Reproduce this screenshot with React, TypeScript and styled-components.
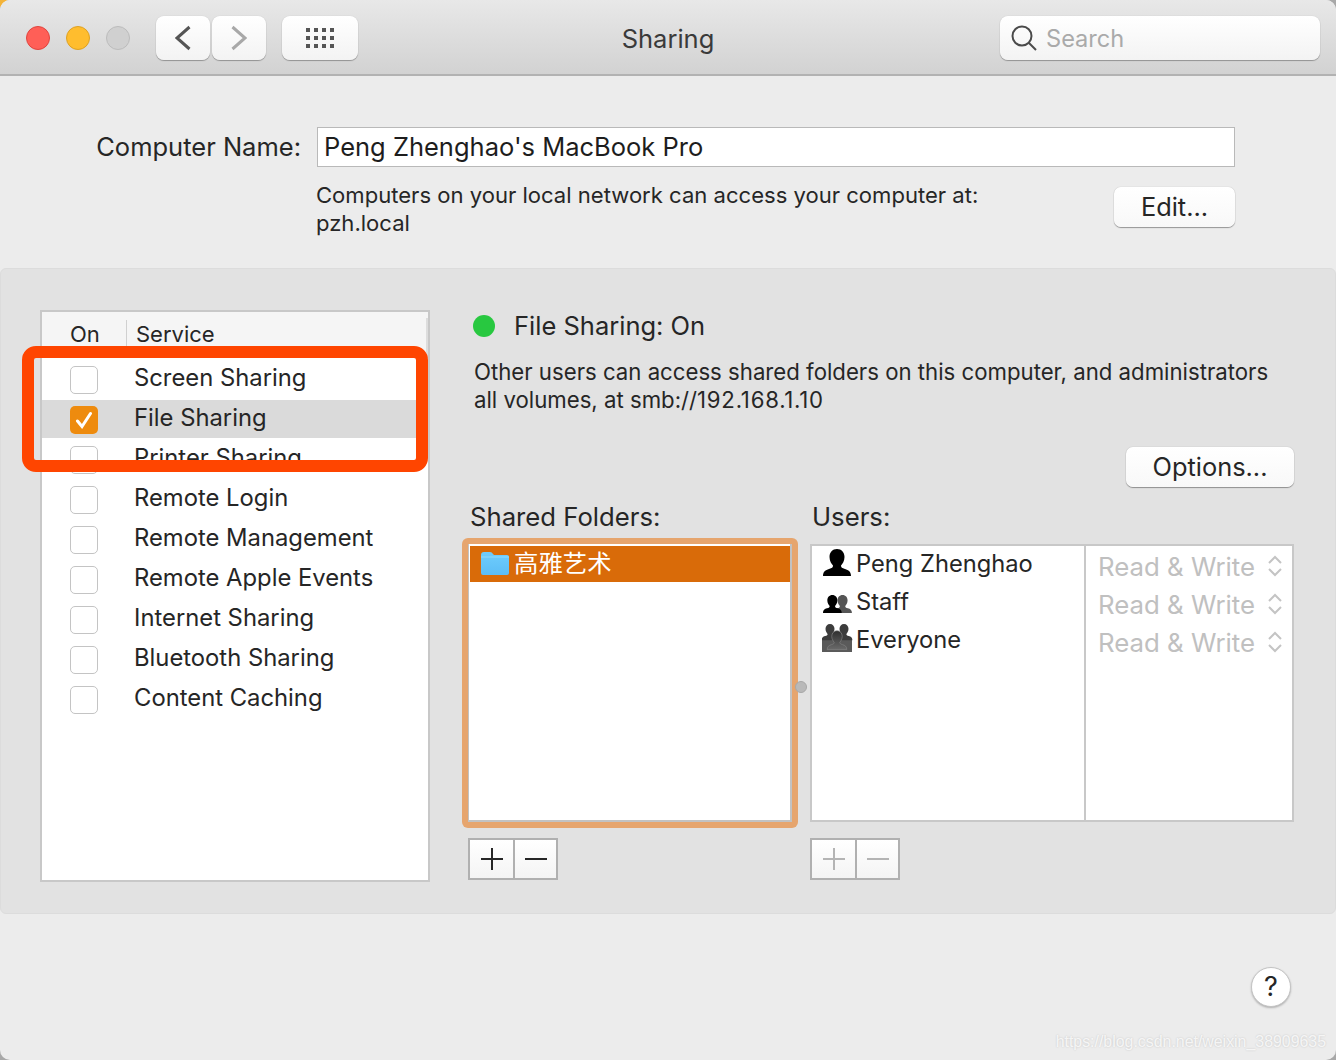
import React from 'react';
import styled, { createGlobalStyle } from 'styled-components';

const GlobalStyle = createGlobalStyle`
  html, body {
    margin: 0;
    padding: 0;
    background: #ffffff;
  }
  * {
    box-sizing: border-box;
  }
`;

const Desktop = styled.div`
  width: 1336px;
  height: 1060px;
  background: linear-gradient(135deg, #f3b33a 5px, #a8a8a8 5px);
`;

const Window = styled.div`
  position: relative;
  width: 1336px;
  height: 1060px;
  display: flex;
  flex-direction: column;
  overflow: hidden;
  background: #ececec;
  border-radius: 10px;
  font-family: Inter, "Noto Sans CJK SC", sans-serif;
  font-size: 22.2px;
  color: #262626;
`;

const TitleBar = styled.div`
  height: 76px;
  flex: none;
  display: flex;
  align-items: center;
  padding: 2px 16px 0 26px;
  background: linear-gradient(#e8e8e8, #d2d2d2);
  border-bottom: 2px solid #b2b2b2;
`;

const Light = styled.span<{ $bg: string; $edge: string }>`
  width: 24px;
  height: 24px;
  border-radius: 50%;
  background: ${p => p.$bg};
  border: 1px solid ${p => p.$edge};
  margin-right: 16px;
`;

const ToolButton = styled.div<{ $w: number }>`
  width: ${p => p.$w}px;
  height: 44px;
  display: flex;
  align-items: center;
  justify-content: center;
  border-radius: 8px;
  background: linear-gradient(#ffffff, #f3f3f3);
  box-shadow: 0 1px 1px rgba(0, 0, 0, 0.3), 0 0 1px rgba(0, 0, 0, 0.2);
`;

const NavGroup = styled.div`
  display: flex;
  gap: 2px;
  margin-left: 10px;
  margin-right: 16px;
`;

const Title = styled.div`
  width: 642px;
  padding-right: 22px;
  text-align: center;
  font-size: 25.5px;
  color: #3a3a3a;
`;

const SearchBox = styled.div`
  width: 320px;
  height: 44px;
  display: flex;
  align-items: center;
  gap: 9px;
  padding-left: 11px;
  border-radius: 8px;
  background: linear-gradient(#ffffff, #f3f3f3);
  box-shadow: 0 1px 1px rgba(0, 0, 0, 0.3), 0 0 1px rgba(0, 0, 0, 0.2);
  color: #aaaaaa;
  font-size: 23.6px;
`;

const NameSection = styled.div`
  height: 192px;
  flex: none;
  padding: 51px 101px 0 0;
  display: grid;
  grid-template-columns: 317px 1fr;
  align-content: start;
`;

const NameLabel = styled.div`
  height: 40px;
  line-height: 40px;
  padding-right: 16px;
  text-align: right;
  font-size: 25.5px;
`;

const NameInput = styled.div`
  height: 40px;
  line-height: 38px;
  padding-left: 6px;
  background: #ffffff;
  border: 1px solid #b9b9b9;
  font-size: 25.5px;
  color: #1d1d1d;
`;

const NameInfo = styled.div`
  grid-column: 2;
  display: flex;
  justify-content: space-between;
  margin-top: 20px;
`;

const NameNote = styled.div`
  margin: -6px 0 0 -1px;
  line-height: 28px;
  font-size: 22.07px;
`;

const PushButton = styled.div<{ $w: number }>`
  width: ${p => p.$w}px;
  height: 40px;
  line-height: 39px;
  text-align: center;
  background: linear-gradient(#ffffff, #f8f8f8);
  border-radius: 7px;
  box-shadow: 0 1px 1px rgba(0, 0, 0, 0.35), 0 0 1px rgba(0, 0, 0, 0.3);
  font-size: 25.4px;
`;

const Panel = styled.div`
  height: 646px;
  flex: none;
  display: grid;
  grid-template-columns: 390px minmax(0, 1fr);
  column-gap: 40px;
  padding: 41px 41px 0 39px;
  background: #e2e2e2;
  border: 1px solid #dcdcdc;
  border-radius: 6px;
`;

const ServiceList = styled.div`
  height: 572px;
  background: #ffffff;
  border: 2px solid #c8c8c8;
`;

const ListHeader = styled.div`
  position: relative;
  height: 46px;
  display: flex;
  align-items: flex-end;
  padding: 0 0 10px 28px;
  background: #f5f5f5;
  font-size: 22px;
  &::after {
    content: '';
    position: absolute;
    right: 0;
    top: 6px;
    bottom: 0;
    width: 2px;
    background: #dddddd;
  }
`;

const HeaderOn = styled.span`
  width: 57px;
  line-height: 28px;
  border-right: 1px solid #d0d0d0;
`;

const HeaderService = styled.span`
  padding-left: 9px;
  line-height: 28px;
`;

const ServiceRow = styled.div<{ $selected?: boolean }>`
  height: 40px;
  display: flex;
  align-items: center;
  padding: 0 0 2px 28px;
  gap: 36px;
  font-size: 23.8px;
  background: ${p => (p.$selected ? 'linear-gradient(transparent 2px, #dadada 2px)' : 'transparent')};
`;

const CheckBox = styled.span<{ $on?: boolean }>`
  width: 28px;
  height: 28px;
  flex: none;
  margin-top: 6px;
  display: flex;
  align-items: center;
  justify-content: center;
  border-radius: 5px;
  background: ${p => (p.$on ? '#ee8b0e' : '#ffffff')};
  border: ${p => (p.$on ? 'none' : '1px solid #c4c4c4')};
`;

const Detail = styled.div`
  display: flex;
  flex-direction: column;
  align-items: flex-start;
`;

const StatusLine = styled.div`
  display: flex;
  align-items: center;
  gap: 19px;
  height: 32px;
  margin-left: 3px;
  margin-bottom: 16px;
  font-size: 25.5px;
`;

const StatusDot = styled.span`
  width: 22px;
  height: 22px;
  border-radius: 50%;
  background: #28c840;
`;

const StatusText = styled.span`
  margin-top: -2px;
`;

const Description = styled.div`
  margin-left: 4px;
  line-height: 28px;
  white-space: pre;
`;

const Address = styled.span`
  letter-spacing: 0.75px;
`;

const OptionsRow = styled.div`
  align-self: stretch;
  display: flex;
  justify-content: flex-end;
  margin-top: 33px;
`;

const Tables = styled.div`
  display: flex;
  margin-top: 13px;
`;

const FolderColumn = styled.div`
  width: 340px;
  flex: none;
`;

const UserColumn = styled.div`
  width: 484px;
  flex: none;
`;

const TableLabel = styled.div<{ $inset?: number }>`
  height: 34px;
  line-height: 34px;
  padding-left: ${p => p.$inset ?? 0}px;
  font-size: 25.7px;
`;

const FocusRing = styled.div`
  width: 336px;
  height: 290px;
  margin-left: -8px;
  margin-top: 4px;
  padding: 6px;
  background: #e6a56e;
  border-radius: 6px;
`;

const FolderList = styled.div`
  height: 278px;
  padding-top: 2px;
  background: #ffffff;
  border: 1px solid #c2c2c2;
  border-width: 0 2px 2px 1px;
  position: relative;
`;

const FolderRow = styled.div`
  height: 36px;
  margin-left: 1px;
  display: flex;
  align-items: center;
  gap: 5px;
  padding-left: 11px;
  background: #d96b09;
  color: #ffffff;
  font-size: 24.4px;
`;

const FolderName = styled.span`
  margin-top: -6px;
`;

const Splitter = styled.span`
  position: absolute;
  right: -17px;
  top: 137px;
  width: 12px;
  height: 12px;
  border-radius: 50%;
  background: #b9b9b9;
  border: 1px solid #a8a8a8;
`;

const UserTable = styled.div`
  height: 278px;
  margin: 10px 0 16px;
  display: grid;
  grid-template-columns: 274px 1fr;
  background: #ffffff;
  border: 2px solid #c8c8c8;
`;

const NamesCol = styled.div`
  border-right: 2px solid #c8c8c8;
  padding-left: 10px;
`;

const UserRow = styled.div`
  height: 38px;
  display: flex;
  align-items: center;
  gap: 2px;
  font-size: 23.7px;
  position: relative;
  top: -2px;
`;

const UserIcon = styled.svg`
  width: 32px;
  height: 32px;
  flex: none;
  margin-top: 2px;
`;

const AccessCol = styled.div`
  padding: 1px 0 0 12px;
`;

const AccessRow = styled.div`
  height: 38px;
  display: flex;
  align-items: center;
  gap: 12px;
  color: #c0c0c0;
  font-size: 25.8px;
`;

const PlusMinus = styled.div<{ $off?: boolean }>`
  width: 90px;
  height: 42px;
  margin-top: 10px;
  display: grid;
  grid-template-columns: 1fr 1fr;
  background: linear-gradient(#ffffff, #f4f4f4);
  border: 2px solid #b0b0b0;
  color: ${p => (p.$off ? '#b4b4b4' : '#262626')};
`;

const PlusMinusCell = styled.div`
  display: flex;
  align-items: center;
  justify-content: center;
  & + & {
    border-left: 2px solid #b0b0b0;
  }
`;

const PlusMinusWrap = styled.div`
  margin-left: -2px;
`;

const Footer = styled.div`
  flex: 1;
  display: flex;
  justify-content: flex-end;
  padding: 53px 45px 0 0;
`;

const HelpButton = styled.div`
  width: 40px;
  height: 40px;
  line-height: 38px;
  text-align: center;
  border-radius: 50%;
  background: #ffffff;
  border: 1px solid #c4c4c4;
  box-shadow: 0 1px 2px rgba(0, 0, 0, 0.25);
  font-size: 27px;
`;

const Watermark = styled.div`
  position: absolute;
  right: 10px;
  bottom: 9px;
  font-family: "Liberation Sans", sans-serif;
  font-size: 15.9px;
  color: rgba(255, 255, 255, 0.8);
  text-shadow: 0 0 2px rgba(0, 0, 0, 0.18);
`;

const Annotation = styled.div`
  position: absolute;
  left: 22px;
  top: 346px;
  width: 406px;
  height: 126px;
  border: 12px solid #ff4500;
  border-radius: 14px;
`;

const services = [
  'Screen Sharing',
  'File Sharing',
  'Printer Sharing',
  'Remote Login',
  'Remote Management',
  'Remote Apple Events',
  'Internet Sharing',
  'Bluetooth Sharing',
  'Content Caching',
];

const Chevron = ({ dir, color }: { dir: 'left' | 'right'; color: string }) => (
  <svg width="18" height="26" viewBox="0 0 18 26" fill="none" stroke={color} strokeWidth="3">
    <path d={dir === 'left' ? 'M15.5 2 L3 13 L15.5 24' : 'M2.5 2 L15 13 L2.5 24'} />
  </svg>
);

const GridIcon = () => (
  <svg width="28" height="20" viewBox="0 0 28 20" fill="#555555">
    {[0, 1, 2].map(r =>
      [0, 1, 2, 3].map(c => <rect key={`${r}-${c}`} x={c * 8} y={r * 8} width="4" height="4" />)
    )}
  </svg>
);

const SearchIcon = () => (
  <svg width="26" height="26" viewBox="0 0 26 26" fill="none" stroke="#4a4a4a" strokeWidth="2">
    <circle cx="11" cy="11" r="9.5" />
    <path d="M18 18 L25 25" />
  </svg>
);

const Check = () => (
  <svg width="18" height="18" viewBox="0 0 18 18" fill="none" stroke="#ffffff" strokeWidth="3" strokeLinecap="round">
    <path d="M2.5 10 L7 15.5 L15.5 2.5" />
  </svg>
);

const FolderIcon = () => (
  <svg width="28" height="24" viewBox="0 0 28 24">
    <defs>
      <linearGradient id="folderFill" x1="0" y1="0" x2="0" y2="1">
        <stop offset="0" stopColor="#6fcdfd" />
        <stop offset="1" stopColor="#5cbdf6" />
      </linearGradient>
    </defs>
    <path d="M0 3 Q0 0 3 0 H9 Q11 0 12 2 L13 3 H26 Q28 3 28 5 V21 Q28 23 26 23 H2 Q0 23 0 21 Z" fill="url(#folderFill)" />
    <path d="M0 5 H28" stroke="#8edcff" strokeWidth="1" />
  </svg>
);

const BUST =
  'M15 1 C19.5 1 22.5 4.5 22.5 9 C22.5 13 20.5 16 19 17.5 C19 19.5 20 20 23 21 C26.5 22 29 23.5 29 28 H1 C1 23.5 3.5 22 7 21 C10 20 11 19.5 11 17.5 C9.5 16 7.5 13 7.5 9 C7.5 4.5 10.5 1 15 1 Z';

const PersonIcon = () => (
  <UserIcon viewBox="0 0 32 32">
    <path d={BUST} fill="#000000" />
  </UserIcon>
);

const GroupIcon = () => (
  <UserIcon viewBox="0 0 32 32">
    <path d={BUST} fill="#555555" transform="translate(10.5 8.3) scale(0.67)" />
    <path d={BUST} fill="#000000" transform="translate(0.3 8.3) scale(0.67)" />
  </UserIcon>
);

const EveryoneIcon = () => (
  <UserIcon viewBox="0 0 32 32">
    <defs>
      <linearGradient id="crowd" x1="0" y1="0" x2="0" y2="1">
        <stop offset="0" stopColor="#2e2e2e" />
        <stop offset="1" stopColor="#6a6a6a" />
      </linearGradient>
    </defs>
    <rect x="0" y="15" width="30" height="13" fill="#5a5a5a" />
    <path d={BUST} fill="#3c3c3c" transform="translate(-1 -0.6) scale(0.6)" />
    <path d={BUST} fill="#3c3c3c" transform="translate(13 -0.6) scale(0.6)" />
    <path d={BUST} fill="url(#crowd)" stroke="#8a8a8a" strokeWidth="0.8" transform="translate(4.5 6) scale(0.7)" />
  </UserIcon>
);

const Stepper = () => (
  <svg width="16" height="22" viewBox="0 0 16 22" fill="none" stroke="#c4c4c4" strokeWidth="2">
    <path d="M2 8 L8 2 L14 8" />
    <path d="M2 14 L8 20 L14 14" />
  </svg>
);

const PlusIcon = () => (
  <svg width="22" height="22" viewBox="0 0 22 22" stroke="currentColor" strokeWidth="2">
    <path d="M0 11 H22 M11 0 V22" />
  </svg>
);

const MinusIcon = () => (
  <svg width="22" height="22" viewBox="0 0 22 22" stroke="currentColor" strokeWidth="2">
    <path d="M0 11 H22" />
  </svg>
);

const users = [
  { name: 'Peng Zhenghao', icon: <PersonIcon /> },
  { name: 'Staff', icon: <GroupIcon /> },
  { name: 'Everyone', icon: <EveryoneIcon /> },
];

export default function App() {
  return (
    <>
      <GlobalStyle />
      <Desktop>
        <Window>
          <TitleBar>
            <Light $bg="#ff5f57" $edge="#e0443e" />
            <Light $bg="#ffbd2e" $edge="#dea123" />
            <Light $bg="#d0d0d0" $edge="#bcbcbc" />
            <NavGroup>
              <ToolButton $w={54}>
                <Chevron dir="left" color="#555555" />
              </ToolButton>
              <ToolButton $w={54}>
                <Chevron dir="right" color="#a8a8a8" />
              </ToolButton>
            </NavGroup>
            <ToolButton $w={76}>
              <GridIcon />
            </ToolButton>
            <Title>Sharing</Title>
            <SearchBox>
              <SearchIcon />
              Search
            </SearchBox>
          </TitleBar>

          <NameSection>
            <NameLabel>Computer Name:</NameLabel>
            <NameInput>Peng Zhenghao's MacBook Pro</NameInput>
            <NameInfo>
              <NameNote>
                Computers on your local network can access your computer at:
                <br />
                pzh.local
              </NameNote>
              <PushButton $w={121}>Edit...</PushButton>
            </NameInfo>
          </NameSection>

          <Panel>
            <ServiceList>
              <ListHeader>
                <HeaderOn>On</HeaderOn>
                <HeaderService>Service</HeaderService>
              </ListHeader>
              {services.map(s => (
                <ServiceRow key={s} $selected={s === 'File Sharing'}>
                  <CheckBox $on={s === 'File Sharing'}>{s === 'File Sharing' && <Check />}</CheckBox>
                  {s}
                </ServiceRow>
              ))}
            </ServiceList>

            <Detail>
              <StatusLine>
                <StatusDot />
                <StatusText>File Sharing: On</StatusText>
              </StatusLine>
              <Description>
                {'Other users can access shared folders on this computer, and administrators\nall volumes, at smb://'}
                <Address>192.168.1.10</Address>
              </Description>
              <OptionsRow>
                <PushButton $w={168}>Options...</PushButton>
              </OptionsRow>
              <Tables>
                <FolderColumn>
                  <TableLabel>Shared Folders:</TableLabel>
                  <FocusRing>
                    <FolderList>
                      <FolderRow>
                        <FolderIcon />
                        <FolderName>高雅艺术</FolderName>
                      </FolderRow>
                      <Splitter />
                    </FolderList>
                  </FocusRing>
                  <PlusMinusWrap>
                    <PlusMinus>
                      <PlusMinusCell>
                        <PlusIcon />
                      </PlusMinusCell>
                      <PlusMinusCell>
                        <MinusIcon />
                      </PlusMinusCell>
                    </PlusMinus>
                  </PlusMinusWrap>
                </FolderColumn>
                <UserColumn>
                  <TableLabel $inset={2}>Users:</TableLabel>
                  <UserTable>
                    <NamesCol>
                      {users.map(u => (
                        <UserRow key={u.name}>
                          {u.icon}
                          {u.name}
                        </UserRow>
                      ))}
                    </NamesCol>
                    <AccessCol>
                      {users.map(u => (
                        <AccessRow key={u.name}>
                          Read &amp; Write
                          <Stepper />
                        </AccessRow>
                      ))}
                    </AccessCol>
                  </UserTable>
                  <PlusMinus $off>
                    <PlusMinusCell>
                      <PlusIcon />
                    </PlusMinusCell>
                    <PlusMinusCell>
                      <MinusIcon />
                    </PlusMinusCell>
                  </PlusMinus>
                </UserColumn>
              </Tables>
            </Detail>
          </Panel>

          <Footer>
            <HelpButton>?</HelpButton>
          </Footer>
          <Watermark>https://blog.csdn.net/weixin_38909635</Watermark>
          <Annotation />
        </Window>
      </Desktop>
    </>
  );
}
